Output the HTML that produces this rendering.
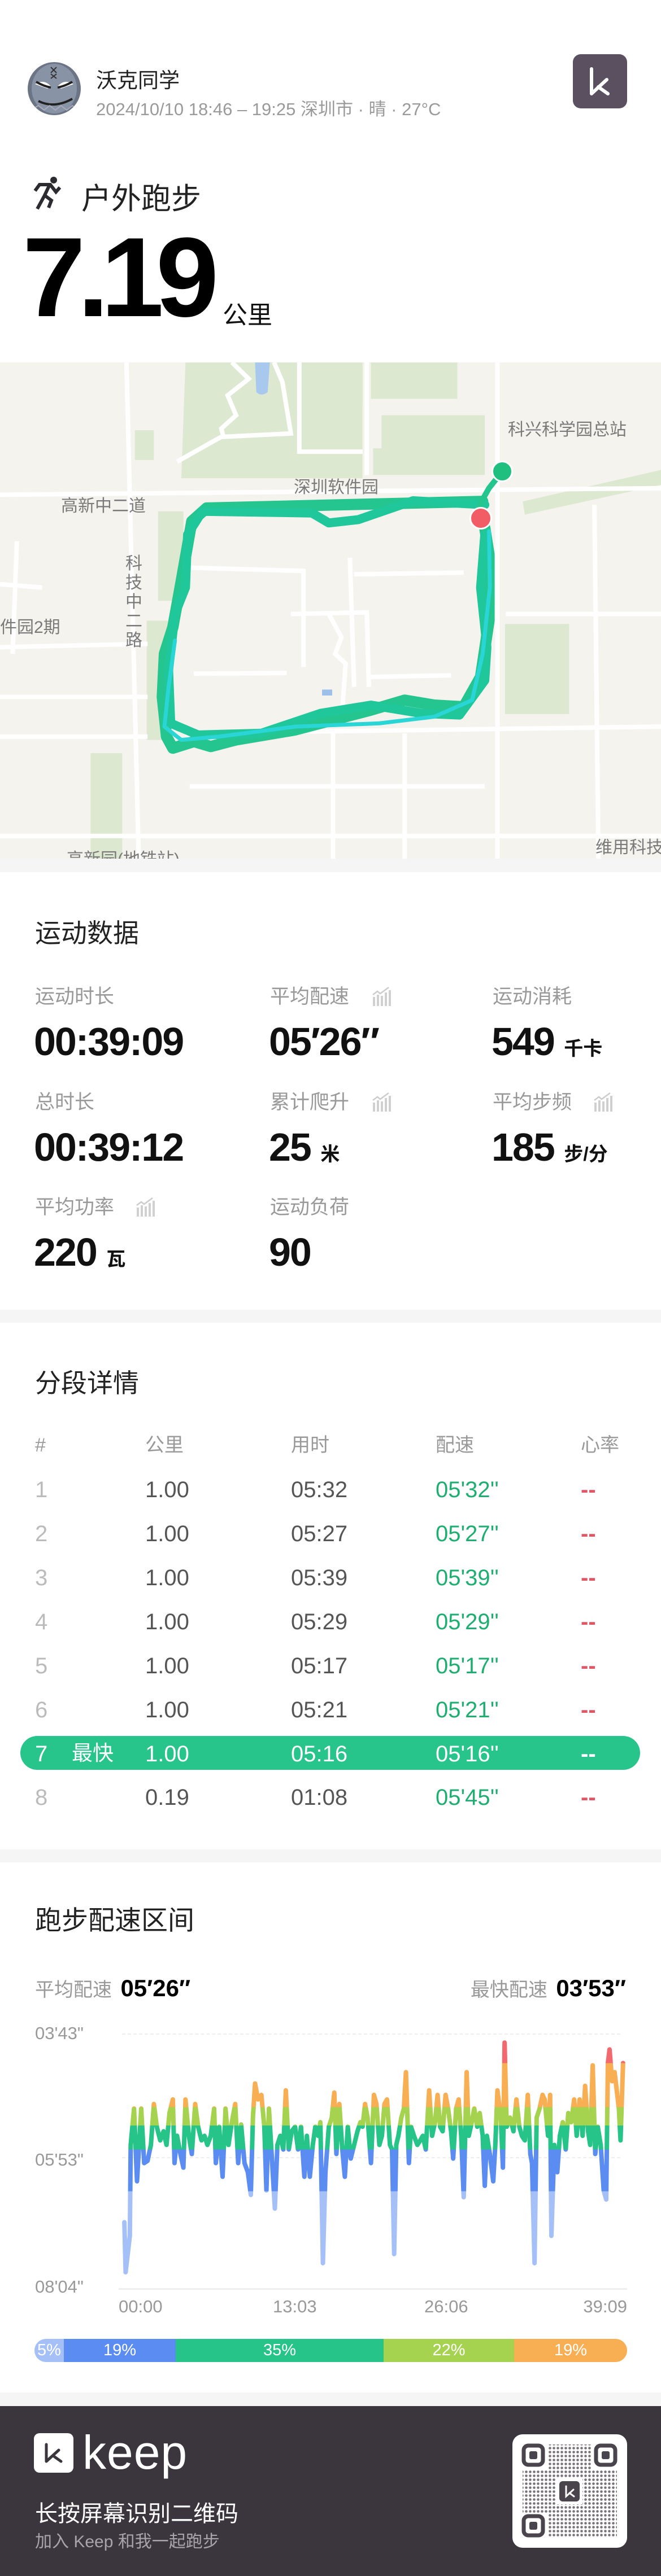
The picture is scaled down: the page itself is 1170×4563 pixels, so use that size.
<!DOCTYPE html>
<html><head><meta charset="utf-8">
<style>
*{margin:0;padding:0;box-sizing:border-box}
body{width:1170px;height:4563px;position:relative;background:#fff;font-family:"Liberation Sans","Noto Sans CJK SC",sans-serif;overflow:hidden}
.a{position:absolute;white-space:nowrap}
.gray{background:#f5f5f5}
.lbl{font-size:35px;color:#999;line-height:1}
.val{font-size:70px;font-weight:bold;color:#111;line-height:1;letter-spacing:-2px}
.unit{font-size:34px;font-weight:bold;color:#111;letter-spacing:0}
.th{font-size:34px;color:#999;line-height:1}
.td{font-size:40px;color:#555;line-height:1}
.num{color:#bbb}
.pace{color:#1fae72}
.hr{color:#e25562;font-weight:bold}
.mt{font-size:30px;color:#7a7a7a;line-height:1}
</style></head><body>

<!-- header -->
<svg class="a" style="left:48px;top:109px" width="96" height="96" viewBox="0 0 96 96">
<defs><clipPath id="c"><circle cx="48" cy="48" r="47"/></clipPath></defs>
<g clip-path="url(#c)">
<rect width="96" height="96" fill="#6b7585"/>
<ellipse cx="48" cy="48" rx="40" ry="44" fill="#8894a6"/>
<path d="M14 40 Q30 30 42 44 L36 48 Z M82 40 Q66 30 54 44 L60 48 Z" fill="#fff"/>
<path d="M16 36 Q30 44 42 46 M80 36 Q66 44 54 46" stroke="#222" stroke-width="4" fill="none"/>
<path d="M20 70 Q48 84 80 66" stroke="#222" stroke-width="4" fill="none"/>
<path d="M10 84 L20 78 L30 86 L40 78 L50 86 L60 78 L70 86 L80 78 L90 86" stroke="#aab" stroke-width="2" fill="none"/>
<path d="M42 10 L52 20 M52 10 L42 20 M42 22 L52 30 M52 22 L42 30" stroke="#333" stroke-width="2"/>
</g></svg>
<div class="a" style="left:170px;top:112px;font-size:37px;color:#222">沃克同学</div>
<div class="a" style="left:170px;top:168px;font-size:31px;color:#9a9a9a">2024/10/10 18:46 – 19:25 深圳市 · 晴 · 27°C</div>
<div class="a" style="left:1014px;top:96px;width:96px;height:96px;border-radius:14px;background:#5b5060">
<svg width="96" height="96" viewBox="0 0 96 96"><path d="M33 26 V70 L60 45 M45 58 L62 70" stroke="#fff" stroke-width="6" fill="none" stroke-linecap="round" stroke-linejoin="round"/></svg></div>

<svg class="a" style="left:58px;top:312px" width="54" height="62" viewBox="0 0 54 62">
<circle cx="37" cy="7" r="6" fill="#2b2b30"/>
<path d="M4 26 L12 15 L31 15 L41 28 L48 20 M29 17 L21 34 L33 43 L28 56 M21 34 L8 58" stroke="#2b2b30" stroke-width="6" fill="none" stroke-linejoin="miter"/>
</svg>
<div class="a" style="left:144px;top:310px;font-size:53px;color:#222">户外跑步</div>
<div class="a" style="left:40px;top:392px;font-size:200px;font-weight:bold;color:#000;letter-spacing:-14px;line-height:1.0">7.19</div>
<div class="a" style="left:394px;top:522px;font-size:44px;color:#111">公里</div>

<!-- map -->
<div class="a" style="left:0;top:642px;width:1170px;height:879px;background:#f5f3ee;overflow:hidden">
<svg class="a" style="left:0;top:-12px" width="1170" height="920" viewBox="0 0 1568 1568" preserveAspectRatio="none">
<g fill="#dde8d0">
<path d="M440 20 L860 20 L860 370 L430 370 Z"/>
<rect x="780" y="20" width="80" height="125"/>
<rect x="880" y="20" width="205" height="110"/>
<path d="M905 180 L1150 180 L1150 360 L885 360 L885 280 L905 280 Z"/>
<rect x="320" y="225" width="45" height="90"/>
<rect x="1198" y="810" width="152" height="272"/>
<rect x="348" y="800" width="50" height="360"/>
<rect x="375" y="470" width="60" height="270"/>
<rect x="215" y="1200" width="75" height="320"/>
<path d="M1240 440 L1568 345 L1568 390 L1245 480 Z"/>
</g>
<path d="M605 20 L640 20 L635 110 Q620 125 608 110 Z" fill="#a9c8ee"/>
<g stroke="#fff" stroke-width="8" fill="none">
<path d="M550 20 L590 70 L540 120 L560 180 L525 220 L530 245 L690 235 L670 80 L650 20" vector-effect="non-scaling-stroke"/>
<path d="M525 245 L420 320" vector-effect="non-scaling-stroke"/>
<path d="M0 420 L1568 400" vector-effect="non-scaling-stroke"/>
<path d="M440 1140 L1568 1120" vector-effect="non-scaling-stroke"/>
<path d="M0 1030 L350 1030" vector-effect="non-scaling-stroke"/>
<path d="M0 880 L350 870" vector-effect="non-scaling-stroke"/>
<path d="M0 1150 L350 1150" vector-effect="non-scaling-stroke"/>
<path d="M300 20 L330 1568" vector-effect="non-scaling-stroke"/>
<path d="M1180 20 L1180 1568" vector-effect="non-scaling-stroke"/>
<path d="M1410 450 L1420 1568" vector-effect="non-scaling-stroke"/>
<path d="M1200 780 L1568 780" vector-effect="non-scaling-stroke"/>
<path d="M870 20 L870 360" vector-effect="non-scaling-stroke"/>
<path d="M710 20 L710 290 L860 290" vector-effect="non-scaling-stroke"/>
<path d="M450 640 L720 650 L720 940" vector-effect="non-scaling-stroke"/>
<path d="M840 660 L1100 655" vector-effect="non-scaling-stroke"/>
<path d="M460 960 L680 958" vector-effect="non-scaling-stroke"/>
<path d="M830 610 L840 1000 M880 970 L1070 965 M690 780 L870 775 L875 1000" vector-effect="non-scaling-stroke"/>
<path d="M780 780 L810 850 L795 900 L820 930 L810 1100" vector-effect="non-scaling-stroke"/>
<path d="M0 690 L100 700 M40 560 L30 900" vector-effect="non-scaling-stroke"/>
<path d="M790 1140 L790 1568 M960 1140 L960 1568 M450 1300 L1150 1300 M0 1450 L1568 1450" vector-effect="non-scaling-stroke"/>
</g>
<rect x="764" y="1008" width="24" height="18" fill="#9cc0ea"/>
<g fill="none" stroke-linejoin="round" stroke-linecap="round">
<path d="M1145 440 L490 460 L455 500 L430 680 L410 820 L390 900 L385 1030 L395 1150 L410 1185 L460 1165 L500 1180 L560 1160 L700 1130 L880 1070 L960 1040 L1030 1055 L1100 1060 L1140 970 L1160 800 L1160 600 L1150 520" stroke="#24c58e" stroke-width="20" vector-effect="non-scaling-stroke"/>
<path d="M1150 450 L980 438 L850 495 L780 505 L740 475 L480 470 L445 540 L440 700 L415 780 L400 950 L405 1110 L470 1145 L620 1140 L760 1080 L880 1055 L1000 1080 L1090 1085 L1150 980 L1155 880 L1140 700 L1150 540" stroke="#1fc79a" stroke-width="16" vector-effect="non-scaling-stroke"/>
<path d="M1160 530 L1162 700 L1145 900 L1120 1040 L1030 1090 L900 1110 L700 1120 L520 1150 L430 1160 L390 1120 L400 1000 L415 860" stroke="#2ad5d6" stroke-width="7" vector-effect="non-scaling-stroke"/>
<path d="M1140 480 L1140 445 L1160 400 L1185 360" stroke="#24c58e" stroke-width="10" vector-effect="non-scaling-stroke"/>
</g>
</svg>
<div class="a" style="left:870px;top:174px;width:38px;height:38px;border-radius:50%;background:#1fbf80;border:3px solid #fff"></div>
<div class="a" style="left:831px;top:256px;width:40px;height:40px;border-radius:50%;background:#f25c64;border:3px solid #fff"></div>
<div class="a mt" style="left:899px;top:105px">科兴科学园总站</div>
<div class="a mt" style="left:520px;top:207px">深圳软件园</div>
<div class="a mt" style="left:108px;top:240px">高新中二道</div>
<div class="a mt" style="left:222px;top:340px;width:32px;white-space:normal;line-height:34px">科<br>技<br>中<br>二<br>路</div>
<div class="a mt" style="left:0;top:455px">件园2期</div>
<div class="a mt" style="left:1054px;top:845px">维用科技</div>
<div class="a mt" style="left:118px;top:866px">高新园(地铁站)</div>
</div>
<div class="a gray" style="left:0;top:1521px;width:1170px;height:24px"></div>

<!-- stats -->
<div class="a" style="left:62px;top:1617px;font-size:46px;color:#222">运动数据</div>
<div class="a lbl" style="left:62px;top:1748px">运动时长</div>
<div class="a lbl" style="left:478px;top:1748px">平均配速</div>
<div class="a lbl" style="left:872px;top:1748px">运动消耗</div>
<div class="a val" style="left:60px;top:1810px">00:39:09</div>
<div class="a val" style="left:476px;top:1810px">05′26″</div>
<div class="a val" style="left:870px;top:1810px">549 <span class="unit">千卡</span></div>
<div class="a lbl" style="left:62px;top:1935px">总时长</div>
<div class="a lbl" style="left:478px;top:1935px">累计爬升</div>
<div class="a lbl" style="left:872px;top:1935px">平均步频</div>
<div class="a val" style="left:60px;top:1997px">00:39:12</div>
<div class="a val" style="left:476px;top:1997px">25 <span class="unit">米</span></div>
<div class="a val" style="left:870px;top:1997px">185 <span class="unit">步/分</span></div>
<div class="a lbl" style="left:62px;top:2121px">平均功率</div>
<div class="a lbl" style="left:478px;top:2121px">运动负荷</div>
<div class="a val" style="left:60px;top:2183px">220 <span class="unit">瓦</span></div>
<div class="a val" style="left:476px;top:2183px">90</div>
<svg width="0" height="0" style="position:absolute"><defs><g id="ic"><path d="M2 14 L10 8 L15 12 L30 1" stroke="#ccc" stroke-width="2.5" fill="none"/><g fill="#d0d0d0"><rect x="2" y="18" width="4" height="16"/><rect x="9" y="14" width="4" height="20"/><rect x="16" y="16" width="4" height="18"/><rect x="23" y="10" width="4" height="24"/><rect x="30" y="6" width="4" height="28"/></g></g></defs></svg>
<svg class="a" style="left:658px;top:1748px" width="36" height="36"><use href="#ic"/></svg>
<svg class="a" style="left:658px;top:1935px" width="36" height="36"><use href="#ic"/></svg>
<svg class="a" style="left:1050px;top:1935px" width="36" height="36"><use href="#ic"/></svg>
<svg class="a" style="left:240px;top:2121px" width="36" height="36"><use href="#ic"/></svg>
<div class="a gray" style="left:0;top:2320px;width:1170px;height:23px"></div>

<!-- splits -->
<div class="a" style="left:62px;top:2414px;font-size:46px;color:#222">分段详情</div>
<div class="a th" style="left:62px;top:2543px">#</div>
<div class="a th" style="left:257px;top:2543px">公里</div>
<div class="a th" style="left:515px;top:2543px">用时</div>
<div class="a th" style="left:771px;top:2543px">配速</div>
<div class="a th" style="left:1028px;top:2543px">心率</div>

<div class="a" style="left:36px;top:3075px;width:1097px;height:60px;border-radius:30px;background:#27c48b"></div>

<div class="a td num" style="left:62px;top:2619px">1</div><div class="a td" style="left:257px;top:2619px">1.00</div><div class="a td" style="left:515px;top:2619px">05:32</div><div class="a td pace" style="left:771px;top:2619px">05'32''</div><div class="a td hr" style="left:1028px;top:2619px">--</div>
<div class="a td num" style="left:62px;top:2697px">2</div><div class="a td" style="left:257px;top:2697px">1.00</div><div class="a td" style="left:515px;top:2697px">05:27</div><div class="a td pace" style="left:771px;top:2697px">05'27''</div><div class="a td hr" style="left:1028px;top:2697px">--</div>
<div class="a td num" style="left:62px;top:2775px">3</div><div class="a td" style="left:257px;top:2775px">1.00</div><div class="a td" style="left:515px;top:2775px">05:39</div><div class="a td pace" style="left:771px;top:2775px">05'39''</div><div class="a td hr" style="left:1028px;top:2775px">--</div>
<div class="a td num" style="left:62px;top:2853px">4</div><div class="a td" style="left:257px;top:2853px">1.00</div><div class="a td" style="left:515px;top:2853px">05:29</div><div class="a td pace" style="left:771px;top:2853px">05'29''</div><div class="a td hr" style="left:1028px;top:2853px">--</div>
<div class="a td num" style="left:62px;top:2931px">5</div><div class="a td" style="left:257px;top:2931px">1.00</div><div class="a td" style="left:515px;top:2931px">05:17</div><div class="a td pace" style="left:771px;top:2931px">05'17''</div><div class="a td hr" style="left:1028px;top:2931px">--</div>
<div class="a td num" style="left:62px;top:3009px">6</div><div class="a td" style="left:257px;top:3009px">1.00</div><div class="a td" style="left:515px;top:3009px">05:21</div><div class="a td pace" style="left:771px;top:3009px">05'21''</div><div class="a td hr" style="left:1028px;top:3009px">--</div>
<div class="a td" style="left:62px;top:3087px;color:#fff">7</div><div class="a td" style="left:127px;top:3087px;color:#fff;font-size:37px">最快</div><div class="a td" style="left:257px;top:3087px;color:#fff">1.00</div><div class="a td" style="left:515px;top:3087px;color:#fff">05:16</div><div class="a td" style="left:771px;top:3087px;color:#fff">05'16''</div><div class="a td" style="left:1028px;top:3087px;color:#fff;font-weight:bold">--</div>
<div class="a td num" style="left:62px;top:3164px">8</div><div class="a td" style="left:257px;top:3164px">0.19</div><div class="a td" style="left:515px;top:3164px">01:08</div><div class="a td pace" style="left:771px;top:3164px">05'45''</div><div class="a td hr" style="left:1028px;top:3164px">--</div>
<div class="a gray" style="left:0;top:3276px;width:1170px;height:23px"></div>

<!-- pace chart -->
<div class="a" style="left:62px;top:3363px;font-size:47px;color:#222">跑步配速区间</div>
<div class="a" style="left:62px;top:3497px;font-size:34px;color:#999">平均配速 <span style="color:#000;font-weight:bold;font-size:42px;margin-left:6px">05′26″</span></div>
<div class="a" style="right:62px;top:3497px;font-size:34px;color:#999">最快配速 <span style="color:#000;font-weight:bold;font-size:42px;margin-left:6px">03′53″</span></div>
<div class="a" style="left:62px;top:3584px;font-size:31px;color:#999">03'43"</div>
<div class="a" style="left:62px;top:3808px;font-size:31px;color:#999">05'53"</div>
<div class="a" style="left:62px;top:4033px;font-size:31px;color:#999">08'04"</div>
<div class="a" style="left:216px;top:3602px;width:882px;border-top:2px dashed #eee"></div>
<div class="a" style="left:216px;top:3821px;width:882px;border-top:2px dashed #eee"></div>
<div class="a" style="left:210px;top:4053px;width:900px;height:3px;background:#eee"></div>
<div class="a" style="left:210px;top:4068px;font-size:31px;color:#999">00:00</div>
<div class="a" style="left:483px;top:4068px;font-size:31px;color:#999">13:03</div>
<div class="a" style="left:751px;top:4068px;font-size:31px;color:#999">26:06</div>
<div class="a" style="right:60px;top:4068px;font-size:31px;color:#999">39:09</div>
<svg class="a" style="left:0;top:3300px" width="1170" height="1263" viewBox="0 0 1568 1568" preserveAspectRatio="none">
<defs><linearGradient id="pg" gradientUnits="userSpaceOnUse" x1="0" y1="0" x2="0" y2="1568">
<stop offset="0.2806" stop-color="#f26a6d"/><stop offset="0.2806" stop-color="#f8ae52"/>
<stop offset="0.3425" stop-color="#f8ae52"/><stop offset="0.3425" stop-color="#a6d34f"/>
<stop offset="0.368" stop-color="#a6d34f"/><stop offset="0.368" stop-color="#26c489"/>
<stop offset="0.4018" stop-color="#26c489"/><stop offset="0.4018" stop-color="#5b8cf2"/>
<stop offset="0.4605" stop-color="#5b8cf2"/><stop offset="0.4605" stop-color="#a5c0f7"/>
</linearGradient></defs>
<polyline fill="none" stroke="url(#pg)" stroke-width="8" vector-effect="non-scaling-stroke" stroke-linejoin="round" stroke-linecap="round" points="295,790 298,900 308,820 310,620 318,540 325,700 330,620 335,540 342,660 350,655 358,620 365,530 372,580 380,610 388,590 395,620 402,550 410,520 414,660 420,600 428,640 435,670 440,520 448,600 455,640 463,530 470,580 478,610 485,600 492,620 500,600 508,540 512,660 520,580 528,690 535,540 542,620 550,570 558,530 565,660 572,575 580,660 588,680 595,730 600,560 605,485 612,520 620,510 627,580 632,720 638,540 645,650 652,760 658,620 665,600 672,630 678,500 685,630 692,590 700,580 707,630 714,580 722,690 728,600 735,690 742,620 748,580 755,600 760,570 766,880 772,680 780,580 787,560 793,505 798,640 805,530 812,630 818,690 825,580 832,650 840,620 848,590 855,570 860,580 866,530 872,560 880,660 887,510 893,530 900,620 906,600 912,530 918,520 925,620 930,630 935,860 940,620 945,600 952,560 958,540 963,460 970,660 975,580 982,600 990,620 997,610 1003,600 1010,630 1018,500 1025,600 1032,570 1038,510 1044,580 1050,590 1057,510 1063,540 1070,590 1075,650 1082,540 1088,520 1094,600 1100,735 1107,460 1112,600 1118,575 1125,540 1132,580 1138,550 1145,600 1150,710 1155,600 1162,640 1170,700 1175,620 1180,500 1188,560 1193,670 1197,395 1202,580 1210,560 1218,590 1225,520 1232,580 1238,600 1245,610 1252,510 1258,640 1262,660 1268,880 1273,560 1280,540 1287,510 1292,520 1300,600 1305,510 1308,820 1315,620 1322,680 1328,600 1335,570 1342,630 1348,550 1355,570 1362,520 1368,600 1375,520 1382,600 1388,490 1395,590 1400,620 1406,445 1412,640 1418,580 1425,620 1432,720 1438,740 1442,440 1446,410 1452,480 1458,460 1463,500 1468,540 1472,610 1478,440"/>
</svg>
<div class="a" style="left:61px;top:4143px;width:1049px;height:41px;border-radius:21px;overflow:hidden;display:flex;font-size:29px;color:#fff;line-height:41px;text-align:center">
<div style="width:52px;background:#a5c0f7">5%</div>
<div style="width:198px;background:#5b8cf2">19%</div>
<div style="width:368px;background:#26c489">35%</div>
<div style="width:231px;background:#a6d34f">22%</div>
<div style="width:200px;background:#f8ae52">19%</div>
</div>
<div class="a gray" style="left:0;top:4238px;width:1170px;height:24px"></div>

<!-- footer -->
<div class="a" style="left:0;top:4262px;width:1170px;height:301px;background:#3b353d"></div>
<div class="a" style="left:60px;top:4310px;width:70px;height:70px;border-radius:10px;background:#fff">
<svg width="70" height="70" viewBox="0 0 70 70"><path d="M22 20 V50 L44 30 M34 40 L48 50" stroke="#3b353d" stroke-width="5" fill="none" stroke-linecap="round" stroke-linejoin="round"/></svg></div>
<div class="a" style="left:146px;top:4302px;font-size:84px;color:#fff;line-height:1;letter-spacing:1px">keep</div>
<div class="a" style="left:62px;top:4420px;font-size:40px;color:#fff">长按屏幕识别二维码</div>
<div class="a" style="left:62px;top:4477px;font-size:30px;color:#a9a4ab">加入 Keep 和我一起跑步</div>
<div class="a" style="left:907px;top:4312px;width:203px;height:201px;border-radius:18px;background:#fff">
<svg width="203" height="201" viewBox="0 0 203 201">
<defs><pattern id="dt" width="7" height="7" patternUnits="userSpaceOnUse"><circle cx="3.5" cy="3.5" r="2.3" fill="#4a444c"/></pattern></defs>
<rect x="18" y="18" width="167" height="165" fill="url(#dt)" opacity="0.75"/>
<g fill="#fff"><rect x="14" y="14" width="48" height="48"/><rect x="141" y="14" width="48" height="48"/><rect x="14" y="139" width="48" height="48"/><rect x="78" y="78" width="46" height="46"/></g>
<g fill="none" stroke="#4a444c" stroke-width="7"><rect x="20" y="20" width="34" height="34" rx="8"/><rect x="148" y="20" width="34" height="34" rx="8"/><rect x="20" y="145" width="34" height="34" rx="8"/></g>
<g fill="#4a444c"><rect x="30" y="30" width="14" height="14" rx="3"/><rect x="158" y="30" width="14" height="14" rx="3"/><rect x="30" y="155" width="14" height="14" rx="3"/><rect x="83" y="83" width="36" height="36" rx="6"/></g>
<path d="M95 92 V110 L108 98 M101 104 L109 110" stroke="#fff" stroke-width="3" fill="none" stroke-linecap="round"/>
</svg></div>
</body></html>
